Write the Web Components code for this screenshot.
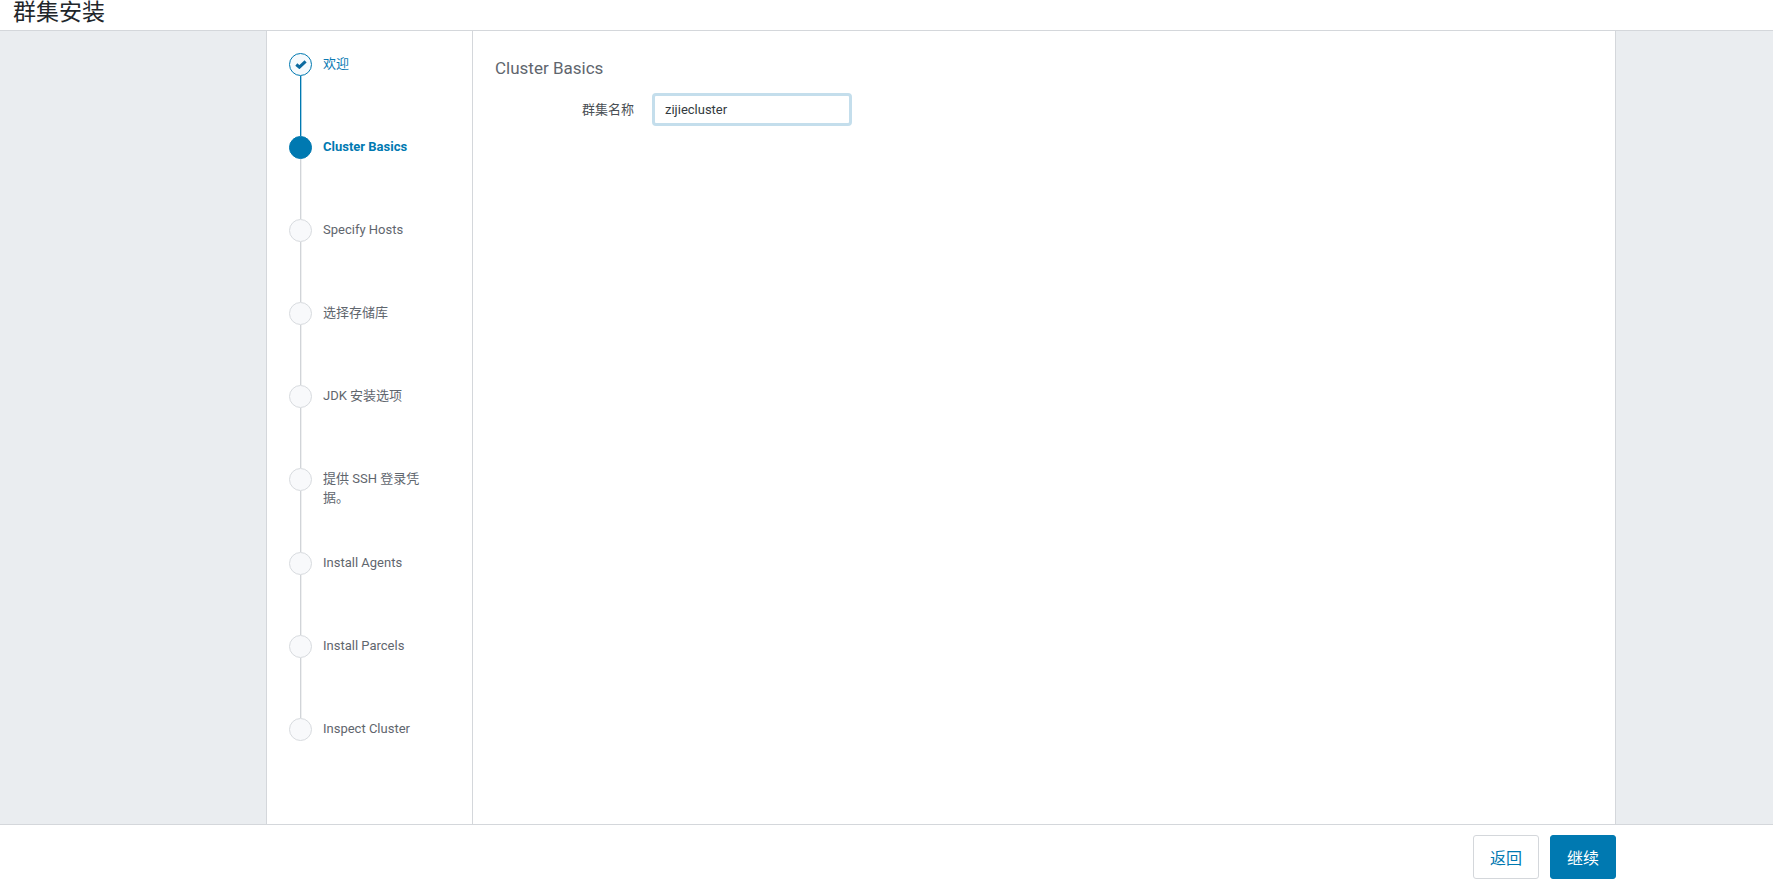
<!DOCTYPE html>
<html lang="zh">
<head>
<meta charset="utf-8">
<title>群集安装</title>
<style>
  html, body { margin: 0; height: 100%; }
  body { font-family: Roboto, "Noto Sans CJK SC", sans-serif; background: #fff; overflow: hidden; }
</style>
</head>
<body>
<wizard-page>
  <span slot="title">群集安装</span>
  <wizard-step slot="steps" state="done">欢迎</wizard-step>
  <wizard-step slot="steps" state="active">Cluster Basics</wizard-step>
  <wizard-step slot="steps">Specify Hosts</wizard-step>
  <wizard-step slot="steps">选择存储库</wizard-step>
  <wizard-step slot="steps">JDK 安装选项</wizard-step>
  <wizard-step slot="steps">提供 SSH 登录凭据。</wizard-step>
  <wizard-step slot="steps">Install Agents</wizard-step>
  <wizard-step slot="steps">Install Parcels</wizard-step>
  <wizard-step slot="steps" state="last">Inspect Cluster</wizard-step>
  <cluster-form label="群集名称" value="zijiecluster">Cluster Basics</cluster-form>
  <wizard-button slot="actions">返回</wizard-button>
  <wizard-button slot="actions" primary>继续</wizard-button>
</wizard-page>

<script>
class WizardPage extends HTMLElement {
  constructor() {
    super();
    this.shadow = this.attachShadow({mode: 'open'});
    this.shadow.innerHTML = `
      <style>
        :host { display: flex; flex-direction: column; height: 884px; }
        header {
          height: 30px;
          border-bottom: 1px solid #d4d7db;
          padding-left: 13px;
          font-size: 23px;
          line-height: 25px;
          color: #22262a;
          overflow: hidden;
        }
        .body {
          flex: 1;
          min-height: 0;
          background: #eaedf0;
          padding: 0 157px 0 266px;
          display: flex;
        }
        .panel {
          flex: 1;
          display: flex;
          background: #fff;
          border-left: 1px solid #d4d7db;
          border-right: 1px solid #d4d7db;
        }
        nav {
          width: 206px;
          flex: none;
          box-sizing: border-box;
          padding: 22px 0 0 22px;
          border-right: 1px solid #d4d7db;
        }
        main { flex: 1; }
        footer {
          box-sizing: border-box;
          height: 60px;
          border-top: 1px solid #d4d7db;
          padding: 10px 157px 0 0;
          display: flex;
          justify-content: flex-end;
          align-items: flex-start;
          gap: 11px;
        }
      </style>
      <header><slot name="title"></slot></header>
      <div class="body">
        <div class="panel">
          <nav><slot name="steps"></slot></nav>
          <main><slot></slot></main>
        </div>
      </div>
      <footer><slot name="actions"></slot></footer>
    `;
  }
}

class WizardStep extends HTMLElement {
  constructor() {
    super();
    this.shadow = this.attachShadow({mode: 'open'});
    this.shadow.innerHTML = `
      <style>
        :host {
          display: flex;
          height: 83.1px;
          gap: 11px;
          font-size: 13px;
          line-height: 19px;
          color: #5f666e;
        }
        .rail {
          flex: none;
          width: 23px;
          display: flex;
          flex-direction: column;
          align-items: center;
        }
        .dot {
          flex: none;
          box-sizing: border-box;
          width: 23px;
          height: 23px;
          border-radius: 50%;
          border: 1px solid #d8dbdf;
          background: #f8f9fb;
          display: flex;
          align-items: center;
          justify-content: center;
        }
        .line { flex: 1; width: 1px; background: #d1d4d8; box-shadow: 1px 0 0 rgba(209,212,216,.35); }
        .label { width: 100px; padding-top: 1px; }
        svg { display: none; }
        :host([state="done"]) { color: #0a7ab3; }
        :host([state="done"]) .dot { border-color: #0079b1; background: #f6fafd; }
        :host([state="done"]) svg { display: block; }
        :host([state="done"]) .line { background: #0079b1; box-shadow: 1px 0 0 rgba(0,121,177,.35); }
        :host([state="active"]) { color: #0079b1; font-weight: 700; }
        :host([state="active"]) .dot { border-color: #0079b1; background: #0079b1; }
        :host([state="last"]) .line { display: none; }
      </style>
      <div class="rail">
        <div class="dot">
          <svg width="12" height="9" viewBox="0 0 12 9"><path d="M1.3 4.5 4.4 7.2 10.6 1.3" fill="none" stroke="#0d6a9f" stroke-width="3"/></svg>
        </div>
        <div class="line"></div>
      </div>
      <div class="label"><slot></slot></div>
    `;
  }
}

class ClusterForm extends HTMLElement {
  constructor() {
    super();
    this.shadow = this.attachShadow({mode: 'open'});
    this.shadow.innerHTML = `
      <style>
        :host { display: block; padding: 25px 0 0 22px; }
        h2 {
          margin: 0 0 13px;
          font-size: 17px;
          line-height: 24px;
          font-weight: 400;
          color: #5f666e;
        }
        .row { display: flex; align-items: center; }
        label {
          width: 139px;
          flex: none;
          padding-bottom: 3px;
          text-align: right;
          font-size: 13px;
          color: #4a4f55;
        }
        input {
          margin-left: 18px;
          box-sizing: border-box;
          width: 200px;
          height: 33px;
          padding: 0 10px;
          border: 3px solid #c4deec;
          border-radius: 4px;
          outline: none;
          font: 13px Roboto, sans-serif;
          color: #333a40;
          background: #fff;
        }
      </style>
      <h2><slot></slot></h2>
      <div class="row">
        <label class="inject-label"></label>
        <input type="text">
      </div>
    `;
  }
  connectedCallback() {
    this.shadow.querySelector(".inject-label").innerText = this.getAttribute('label');
    this.shadow.querySelector("input").setAttribute('value', this.getAttribute('value'));
  }
}

class WizardButton extends HTMLElement {
  constructor() {
    super();
    this.shadow = this.attachShadow({mode: 'open'});
    this.shadow.innerHTML = `
      <style>
        :host {
          display: flex;
          align-items: center;
          justify-content: center;
          box-sizing: border-box;
          height: 44px;
          width: 66px;
          border: 1px solid #d4d7db;
          border-radius: 3px;
          background: #fff;
          color: #0079b1;
          font-size: 16px;
        }
        :host([primary]) {
          background: #0079b1;
          border-color: #0079b1;
          color: #fff;
        }
      </style>
      <slot></slot>
    `;
  }
}

window.customElements.define('wizard-page', WizardPage);
window.customElements.define('wizard-step', WizardStep);
window.customElements.define('cluster-form', ClusterForm);
window.customElements.define('wizard-button', WizardButton);
</script>
</body>
</html>
